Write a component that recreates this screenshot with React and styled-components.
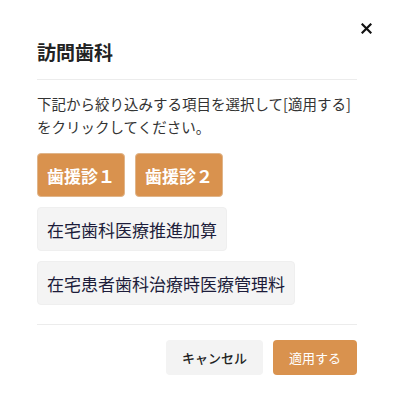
import React, { useState } from "react";
import styled, { createGlobalStyle } from "styled-components";

const GlobalStyle = createGlobalStyle`
  html, body {
    margin: 0;
    padding: 0;
    background: #fff;
    font-family: "Noto Sans CJK JP", "Noto Sans", sans-serif;
  }
`;

const Modal = styled.div`
  position: relative;
  width: 393px;
  height: 409px;
  box-sizing: border-box;
  padding: 37px 36px 0 37px;
  background: #fff;
`;

const Close = styled.button`
  position: absolute;
  top: 22px;
  right: 20px;
  width: 13px;
  height: 13px;
  padding: 0;
  border: none;
  background: none;
  cursor: pointer;
  display: flex;
  align-items: center;
  justify-content: center;
`;

const Title = styled.h2`
  margin: 0;
  font-size: 19px;
  font-weight: 700;
  line-height: 30px;
  color: #222;
`;

const Divider = styled.hr`
  margin: ${(p) => p.$margin};
  border: none;
  border-top: 1px solid #ececec;
`;

const Desc = styled.p`
  margin: 0;
  font-size: 14.5px;
  line-height: 23px;
  color: #333;
`;

const ChipList = styled.div`
  display: flex;
  flex-wrap: wrap;
  gap: 10px;
  margin-top: 15px;
`;

const Chip = styled.button`
  height: 44px;
  padding: 0 9px;
  border-radius: 4px;
  border: 1px solid ${(p) => (p.$active ? "#e0b58a" : "#efefef")};
  background: ${(p) => (p.$active ? "#d9924e" : "#f4f4f4")};
  color: ${(p) => (p.$active ? "#fff" : "#1c1c3a")};
  font-family: inherit;
  font-size: 17px;
  font-weight: ${(p) => (p.$active ? 700 : 400)};
  cursor: pointer;
  white-space: nowrap;
`;

const Footer = styled.div`
  display: flex;
  justify-content: flex-end;
  gap: 10px;
`;

const Button = styled.button`
  height: 35px;
  padding: 0 16px;
  border: none;
  border-radius: 4px;
  background: ${(p) => (p.$primary ? "#d9924e" : "#f3f3f3")};
  color: ${(p) => (p.$primary ? "#fff" : "#222")};
  font-family: inherit;
  font-size: 13px;
  font-weight: ${(p) => (p.$primary ? 400 : 500)};
  cursor: pointer;
`;

const items = [
  { label: "歯援診１", active: true },
  { label: "歯援診２", active: true },
  { label: "在宅歯科医療推進加算", active: false },
  { label: "在宅患者歯科治療時医療管理料", active: false },
];

const App = () => {
  const [selected, setSelected] = useState(items);

  const toggle = (i) => {
    setSelected(selected.map((it, idx) => (idx === i ? { ...it, active: !it.active } : it)));
  };

  return (
    <Modal>
      <GlobalStyle />
      <Close aria-label="close">
        <svg width="11" height="11" viewBox="0 0 11 11">
          <path d="M1.5 1.5 L9.5 9.5 M9.5 1.5 L1.5 9.5" stroke="#111" strokeWidth="2.2" strokeLinecap="square" />
        </svg>
      </Close>
      <Title>訪問歯科</Title>
      <Divider $margin="12px 0 12px" />
      <Desc>
        下記から絞り込みする項目を選択して[適用する]
        <br />
        をクリックしてください。
      </Desc>
      <ChipList>
        {selected.map((it, i) => (
          <Chip key={it.label} $active={it.active} onClick={() => toggle(i)}>
            {it.label}
          </Chip>
        ))}
      </ChipList>
      <Divider $margin="19px 0 15px" />
      <Footer>
        <Button>キャンセル</Button>
        <Button $primary>適用する</Button>
      </Footer>
    </Modal>
  );
};

export default App;
